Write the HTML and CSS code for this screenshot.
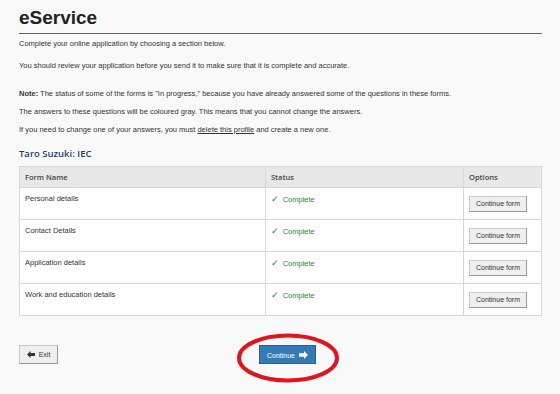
FILE: index.html
```html
<!DOCTYPE html>
<html lang="en">
<head>
    <meta charset="UTF-8">
    <title>eService</title>
    <link rel="stylesheet" href="styles.css">
</head>
<body>

<div class="container">
    <h1>eService</h1>

    <p class="intro">Complete your online application by choosing a section below.</p>
    <p class="review">You should review your application before you send it to make sure that it is complete and accurate.</p>

    <p class="note"><b>Note:</b> The status of some of the forms is "In progress," because you have already answered some of the questions in these forms.</p>
    <p class="note">The answers to these questions will be coloured gray. This means that you cannot change the answers.</p>
    <p class="note">If you need to change one of your answers, you must <a href="#">delete this profile</a> and create a new one.</p>

    <h2>Taro Suzuki: IEC</h2>

    <table class="forms">
        <thead>
            <tr>
                <th class="col-name">Form Name</th>
                <th class="col-status">Status</th>
                <th class="col-options">Options</th>
            </tr>
        </thead>
        <tbody>
            <tr>
                <td>Personal details</td>
                <td class="status"><span class="tick">&#10003;</span> Complete</td>
                <td class="options"><button class="btn">Continue form</button></td>
            </tr>
            <tr>
                <td>Contact Details</td>
                <td class="status"><span class="tick">&#10003;</span> Complete</td>
                <td class="options"><button class="btn">Continue form</button></td>
            </tr>
            <tr>
                <td>Application details</td>
                <td class="status"><span class="tick">&#10003;</span> Complete</td>
                <td class="options"><button class="btn">Continue form</button></td>
            </tr>
            <tr>
                <td>Work and education details</td>
                <td class="status"><span class="tick">&#10003;</span> Complete</td>
                <td class="options"><button class="btn">Continue form</button></td>
            </tr>
        </tbody>
    </table>

    <div class="actions">
        <button class="btn btn-exit"><svg class="icon icon-left" width="8" height="7" viewBox="0 0 8 7"><path d="M0 3.5 L3.5 0 L3.5 2 L8 2 L8 5 L3.5 5 L3.5 7 Z" fill="#333"/></svg>Exit</button>
        <div class="continue-wrap">
            <button class="btn btn-primary">Continue<svg class="icon icon-right" width="9" height="8" viewBox="0 0 9 8"><path d="M9 4 L5 0 L5 2.3 L0 2.3 L0 5.7 L5 5.7 L5 8 Z" fill="#fff"/></svg></button>
            <svg class="circle" width="108" height="56" viewBox="0 0 108 56">
                <ellipse cx="53" cy="27" rx="49" ry="22.5" fill="none" stroke="#e0141e" stroke-width="4"/>
            </svg>
        </div>
    </div>
</div>

</body>
</html>
```

FILE: styles.css
```css
body {
    font-family: 'Liberation Sans', Arial, sans-serif;
    background: #f9f9f9;
    margin: 0;
    padding: 0;
    color: #333;
}

.container {
    width: 523px;
    padding: 8px 0 30px 19px;
}

h1 {
    font-size: 19px;
    font-weight: bold;
    margin: 0;
    padding-bottom: 5px;
    border-bottom: 1px solid #a04a4a;
    color: #222;
    line-height: 20px;
}

p {
    font-size: 7.5px;
    margin: 0;
    line-height: 18px;
}

.intro {
    margin-top: 1px;
}

.review {
    margin-top: 4px;
}

.review + .note {
    margin-top: 10px;
}

.note b {
    font-weight: bold;
}

.note a {
    color: #333;
}

h2 {
    font-family: 'Open Sans', sans-serif;
    font-size: 9.5px;
    font-weight: 600;
    color: #1f3f66;
    margin: 8px 0 0;
    line-height: 14px;
}

.forms {
    margin-top: 5px;
    width: 523px;
    border-collapse: collapse;
    background: #fff;
    font-size: 7.5px;
}

.forms th,
.forms td {
    border: 1px solid #d8d8d8;
    text-align: left;
    vertical-align: top;
    padding: 6px 5px;
}

.forms th {
    background: #e8e8e8;
    font-family: 'Open Sans', sans-serif;
    font-weight: 600;
    font-size: 7.5px;
    color: #444;
    height: 6px;
    padding: 5px 5px;
}

.col-name {
    width: 235px;
}

.col-status {
    width: 187px;
}

.forms td {
    height: 19px;
}

.status {
    color: #2d8a2d;
}

.tick {
    font-family: 'DejaVu Sans', sans-serif;
    font-size: 9px;
    color: #2a7d2a;
    margin-right: 2px;
}

.forms td.options {
    vertical-align: middle;
    padding: 0 5px;
}

.btn {
    font-family: 'Liberation Sans', Arial, sans-serif;
    font-size: 7px;
    background: #efefef;
    border: 1px solid #c8c8c8;
    border-right-color: #999;
    border-bottom-color: #999;
    color: #333;
    padding: 0;
    width: 58px;
    height: 16px;
    cursor: pointer;
}

.icon {
    vertical-align: -1px;
}

.icon-left {
    margin-right: 4px;
}

.icon-right {
    margin-left: 4px;
}

.actions {
    display: flex;
    align-items: center;
    margin-top: 29px;
}

.btn-exit {
    width: 39px;
    height: 19px;
}

.continue-wrap {
    position: relative;
    margin-left: 201px;
}

.btn-primary {
    width: 57px;
    height: 19px;
    background: #337ab7;
    border: 1px solid #2a5f8f;
    color: #fff;
    display: block;
}

.circle {
    position: absolute;
    left: -24px;
    top: -14px;
    overflow: visible;
    pointer-events: none;
}
```
